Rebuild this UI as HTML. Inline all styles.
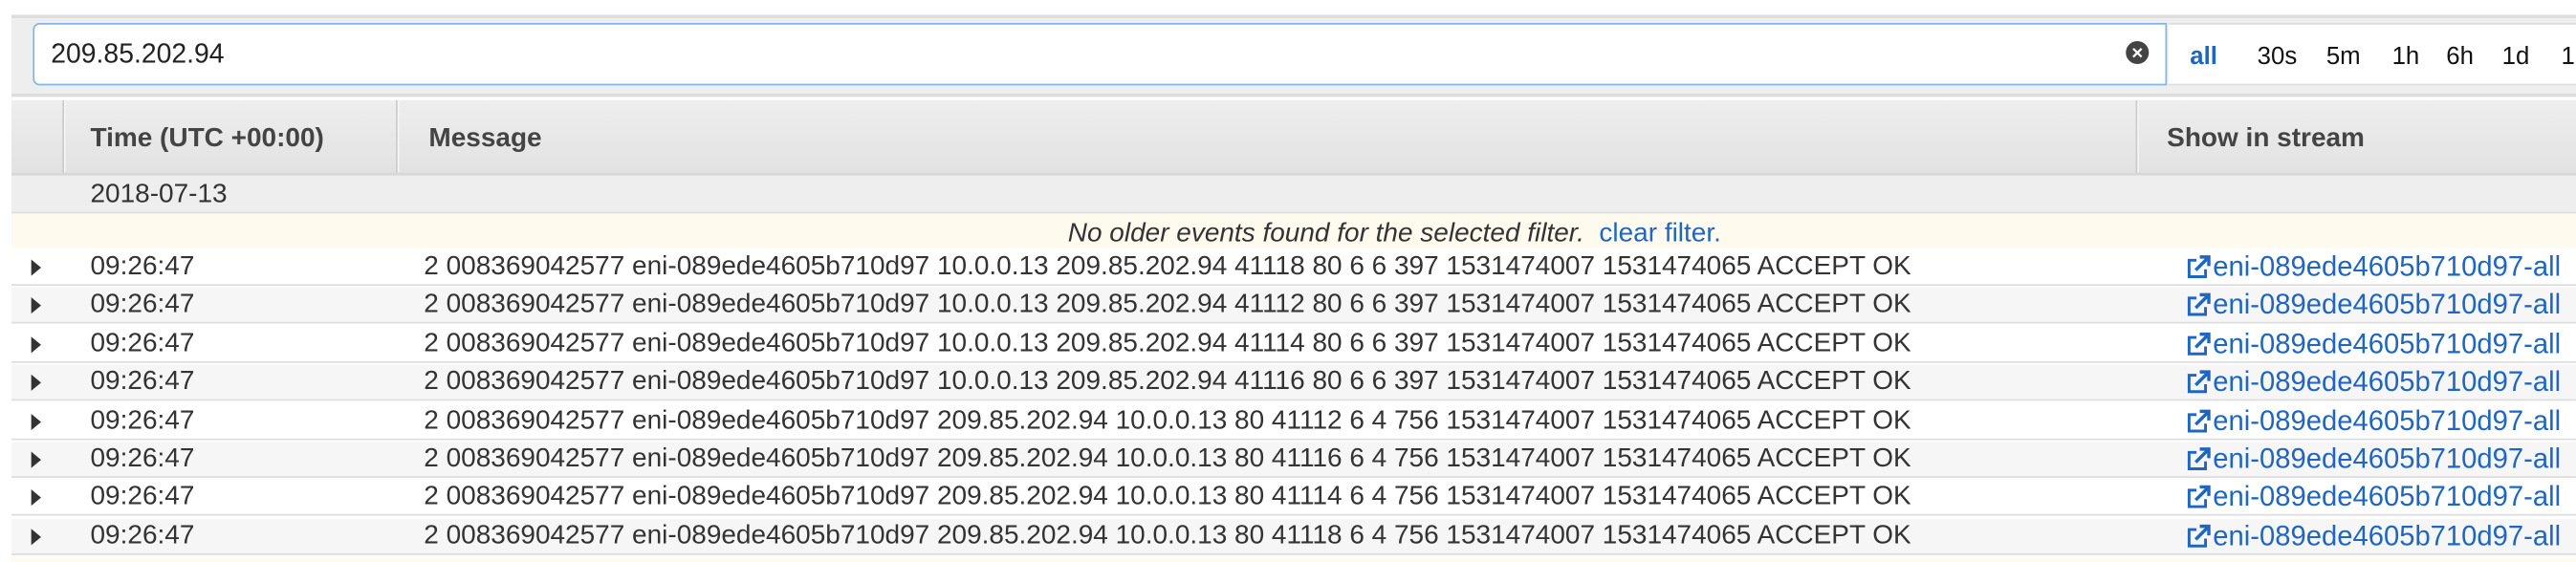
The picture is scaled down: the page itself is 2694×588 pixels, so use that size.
<!DOCTYPE html>
<html><head><meta charset="utf-8"><style>
html,body{margin:0;padding:0;width:2694px;height:588px;overflow:hidden;background:#fff;}
#s{position:absolute;left:0;top:0;width:1568px;height:342px;transform:scale(1.71811);transform-origin:0 0;font-family:"Liberation Sans",Arial,sans-serif;color:#333;font-size:16.3px;}
.bar{position:absolute;left:7px;top:9px;width:1561px;height:50px;background:#eee;border-top:2px solid #ddd;border-bottom:2px solid #ddd;box-sizing:border-box;}
.inp{position:absolute;left:20px;top:14px;width:1299px;height:38px;box-sizing:border-box;border:1.5px solid #7fb8e8;border-radius:4px 0 0 4px;background:#fff;}
.inp span{position:absolute;left:10px;top:9px;font-size:16.5px;color:#222;}
.x{position:absolute;left:1294px;top:25px;width:14px;height:14px;border-radius:50%;background:#444;color:#fff;font-size:12px;font-weight:bold;line-height:14px;text-align:center;}
.times{position:absolute;left:1320px;top:14px;width:248px;height:38px;background:#fff;border-top:1px solid #ddd;border-bottom:1px solid #ddd;box-sizing:border-box;}
.t{position:absolute;top:26px;font-size:15px;color:#111;}
.hdr{position:absolute;left:7px;top:61px;width:1561px;height:46px;background:linear-gradient(#eee,#e2e2e2);border-bottom:2px solid #d8d8d8;box-sizing:border-box;}
.hdr b{position:absolute;top:14px;font-size:16.3px;color:#444;}
.vd{position:absolute;top:0;width:1px;height:44px;background:#ccc;border-right:1px solid #f6f6f6;}
.date{position:absolute;left:7px;top:107px;width:1561px;height:22px;background:#eee;border-bottom:1px solid #ddd;}
.date span{position:absolute;left:48px;top:2px;}
.note{position:absolute;left:7px;top:130px;width:1561px;height:21px;background:#fefbee;}
.note span{position:absolute;left:643px;top:1px;white-space:nowrap;font-style:italic;font-size:16.3px;line-height:22px;}
.note a{color:#1e66c1;font-style:normal;}
.row{position:absolute;left:7px;width:1561px;height:22px;border-bottom:1.5px solid #ddd;box-sizing:border-box;line-height:21px;}
.row .tri{position:absolute;left:12px;top:6px;width:0;height:0;border-left:6px solid #333;border-top:5px solid transparent;border-bottom:5px solid transparent;}
.row .tm{position:absolute;left:48px;}
.row .msg{position:absolute;left:251px;white-space:nowrap;}
.row .lk{position:absolute;left:1340px;color:#1e66c1;white-space:nowrap;font-size:17px;}
.row svg{position:absolute;left:1323px;top:3px;}
.w{background:#fff}.g{background:#f6f6f6}
</style></head><body><div id="s">
<div class="bar"></div>
<div class="inp"><span>209.85.202.94</span></div>
<div class="x">×</div>
<div class="times"></div>
<span class="t" style="left:1333px;color:#1e66c1;font-weight:bold">all</span>
<span class="t" style="left:1374px">30s</span>
<span class="t" style="left:1416px">5m</span>
<span class="t" style="left:1456px">1h</span>
<span class="t" style="left:1489px">6h</span>
<span class="t" style="left:1523px">1d</span>
<span class="t" style="left:1559px">1</span>
<div class="hdr">
<div class="vd" style="left:31px"></div><div class="vd" style="left:234px"></div><div class="vd" style="left:1293px"></div>
<b style="left:48px">Time (UTC +00:00)</b><b style="left:254px">Message</b><b style="left:1312px">Show in stream</b>
</div>
<div class="date"><span>2018-07-13</span></div>
<div class="note"><span>No older events found for the selected filter. &nbsp;<a>clear filter.</a></span></div>

<div class="row w" style="top:152px"><div class="tri"></div><span class="tm">09:26:47</span><span class="msg">2 008369042577 eni-089ede4605b710d97 10.0.0.13 209.85.202.94 41118 80 6 6 397 1531474007 1531474065 ACCEPT OK</span><svg width="16" height="16" viewBox="0 0 16 16"><path d="M7 3.5H2.5v10h10V9" fill="none" stroke="#1e66c1" stroke-width="1.7"/><path d="M6.5 9.5L13.5 2.5M9 1.5h5.5V7" fill="none" stroke="#1e66c1" stroke-width="2"/></svg><span class="lk">eni-089ede4605b710d97-all</span></div>
<div class="row g" style="top:175.4px"><div class="tri"></div><span class="tm">09:26:47</span><span class="msg">2 008369042577 eni-089ede4605b710d97 10.0.0.13 209.85.202.94 41112 80 6 6 397 1531474007 1531474065 ACCEPT OK</span><svg width="16" height="16" viewBox="0 0 16 16"><path d="M7 3.5H2.5v10h10V9" fill="none" stroke="#1e66c1" stroke-width="1.7"/><path d="M6.5 9.5L13.5 2.5M9 1.5h5.5V7" fill="none" stroke="#1e66c1" stroke-width="2"/></svg><span class="lk">eni-089ede4605b710d97-all</span></div>
<div class="row w" style="top:198.8px"><div class="tri"></div><span class="tm">09:26:47</span><span class="msg">2 008369042577 eni-089ede4605b710d97 10.0.0.13 209.85.202.94 41114 80 6 6 397 1531474007 1531474065 ACCEPT OK</span><svg width="16" height="16" viewBox="0 0 16 16"><path d="M7 3.5H2.5v10h10V9" fill="none" stroke="#1e66c1" stroke-width="1.7"/><path d="M6.5 9.5L13.5 2.5M9 1.5h5.5V7" fill="none" stroke="#1e66c1" stroke-width="2"/></svg><span class="lk">eni-089ede4605b710d97-all</span></div>
<div class="row g" style="top:222.2px"><div class="tri"></div><span class="tm">09:26:47</span><span class="msg">2 008369042577 eni-089ede4605b710d97 10.0.0.13 209.85.202.94 41116 80 6 6 397 1531474007 1531474065 ACCEPT OK</span><svg width="16" height="16" viewBox="0 0 16 16"><path d="M7 3.5H2.5v10h10V9" fill="none" stroke="#1e66c1" stroke-width="1.7"/><path d="M6.5 9.5L13.5 2.5M9 1.5h5.5V7" fill="none" stroke="#1e66c1" stroke-width="2"/></svg><span class="lk">eni-089ede4605b710d97-all</span></div>
<div class="row w" style="top:245.6px"><div class="tri"></div><span class="tm">09:26:47</span><span class="msg">2 008369042577 eni-089ede4605b710d97 209.85.202.94 10.0.0.13 80 41112 6 4 756 1531474007 1531474065 ACCEPT OK</span><svg width="16" height="16" viewBox="0 0 16 16"><path d="M7 3.5H2.5v10h10V9" fill="none" stroke="#1e66c1" stroke-width="1.7"/><path d="M6.5 9.5L13.5 2.5M9 1.5h5.5V7" fill="none" stroke="#1e66c1" stroke-width="2"/></svg><span class="lk">eni-089ede4605b710d97-all</span></div>
<div class="row g" style="top:269px"><div class="tri"></div><span class="tm">09:26:47</span><span class="msg">2 008369042577 eni-089ede4605b710d97 209.85.202.94 10.0.0.13 80 41116 6 4 756 1531474007 1531474065 ACCEPT OK</span><svg width="16" height="16" viewBox="0 0 16 16"><path d="M7 3.5H2.5v10h10V9" fill="none" stroke="#1e66c1" stroke-width="1.7"/><path d="M6.5 9.5L13.5 2.5M9 1.5h5.5V7" fill="none" stroke="#1e66c1" stroke-width="2"/></svg><span class="lk">eni-089ede4605b710d97-all</span></div>
<div class="row w" style="top:292.4px"><div class="tri"></div><span class="tm">09:26:47</span><span class="msg">2 008369042577 eni-089ede4605b710d97 209.85.202.94 10.0.0.13 80 41114 6 4 756 1531474007 1531474065 ACCEPT OK</span><svg width="16" height="16" viewBox="0 0 16 16"><path d="M7 3.5H2.5v10h10V9" fill="none" stroke="#1e66c1" stroke-width="1.7"/><path d="M6.5 9.5L13.5 2.5M9 1.5h5.5V7" fill="none" stroke="#1e66c1" stroke-width="2"/></svg><span class="lk">eni-089ede4605b710d97-all</span></div>
<div class="row g" style="top:315.8px"><div class="tri"></div><span class="tm">09:26:47</span><span class="msg">2 008369042577 eni-089ede4605b710d97 209.85.202.94 10.0.0.13 80 41118 6 4 756 1531474007 1531474065 ACCEPT OK</span><svg width="16" height="16" viewBox="0 0 16 16"><path d="M7 3.5H2.5v10h10V9" fill="none" stroke="#1e66c1" stroke-width="1.7"/><path d="M6.5 9.5L13.5 2.5M9 1.5h5.5V7" fill="none" stroke="#1e66c1" stroke-width="2"/></svg><span class="lk">eni-089ede4605b710d97-all</span></div>
<div style="position:absolute;left:7px;top:339px;width:1561px;height:3px;background:#fefbee"></div>
</div>
</body></html>
